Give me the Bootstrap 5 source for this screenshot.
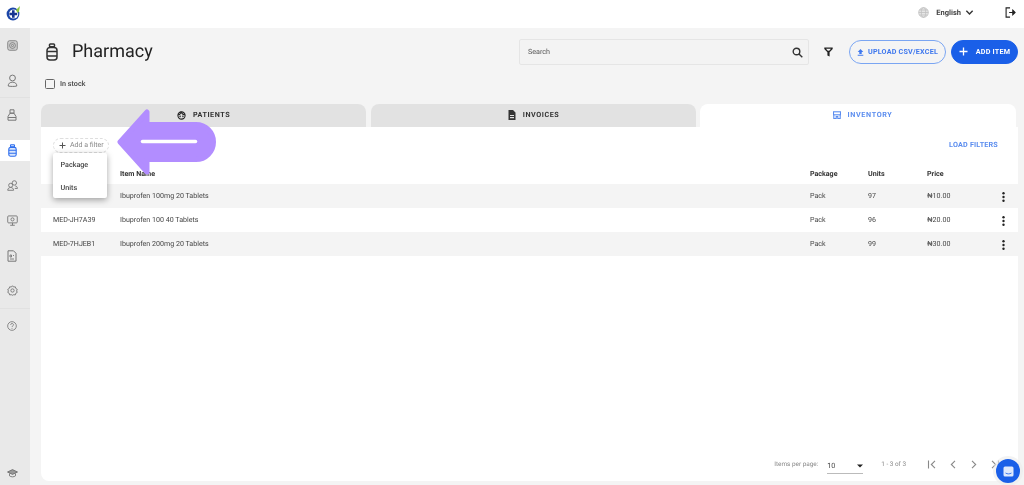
<!DOCTYPE html>
<html lang="en">
<head>
<meta charset="utf-8">
<title>Pharmacy</title>
<link href="https://cdn.jsdelivr.net/npm/bootstrap@5.3.0/dist/css/bootstrap.min.css" rel="stylesheet">
<style>
html,body{height:485px;overflow:hidden}
body{font-family:Roboto,"Liberation Sans",sans-serif;font-size:7.2px;color:#333;background:#f4f4f4;text-rendering:geometricPrecision}
svg{display:block;flex:none}
.top-strip,.shell,.callout,.chat-dot{filter:blur(.35px)}
.top-strip{height:28px;background:#fff;padding:0 8px 3px 5px}
.lang-name{font-weight:700;font-size:7.500px;color:#444;margin:0 4px 0 7px}
.logout-ico{margin-left:31px}
.shell{height:457px}
.side-rail{width:30px;flex:none;background:#e9e9e9}
.rail-cell{height:35px;flex:none;border-bottom:1px solid transparent;padding-right:6px}
.rail-cell.sep{border-bottom-color:#e1e1e1}
.rail-cell.on{background:#fff;height:21px;margin:7px 0 7.500px}
.rail-foot{margin-top:auto;height:16px;padding-right:6px}
.work-pane{padding:0 6px 4px 11px;min-width:0}
.head-row{height:47px;flex:none}
.title-ico{margin:0 13px 0 4px}
.page-title{font-size:18px;font-weight:400;color:#222;margin:0}
.search-box{width:290px;height:26px;background:#f3f3f3;border:1px solid #e5e5e5;border-radius:2px;padding:1px 5px 0 8px;margin-right:15px;color:#555;font-size:7.200px}
.filter-ico{margin-right:16px}
.pill-btn{height:24px;border-radius:12px;font-size:7.200px;font-weight:700;letter-spacing:.2px;padding:0;line-height:1}
.pill-ghost{width:97px;border:1px solid #7aa5f2;color:#3f78ee;background:transparent;margin-right:5px}
.pill-fill{width:67px;background:#1a5fe8;border:1px solid #1a5fe8;color:#fff}
.stock-row{height:18px;margin-bottom:11px;padding-left:4px;color:#444;font-weight:500;flex:none}
.tick-box{width:10px;height:10px;border:1.200px solid #666;border-radius:1.500px;margin-right:5px}
.tab-strip{gap:5px;height:23px;flex:none}
.tab-cell{width:325px;background:#e2e2e2;border-radius:8px 8px 0 0;font-weight:700;font-size:7.200px;letter-spacing:.55px;color:#333;padding-bottom:1px;gap:7px}
.tab-cell.live{width:316px;background:#fff;color:#5b8def;margin-left:-1px;padding-left:9px;letter-spacing:.65px}
.sheet{background:#fff;border-radius:0 0 8px 8px;flex:1;min-height:0;position:relative}
.filter-row{height:37px;padding:0 20px 0 12px;flex:none}
.chip-add{width:56px;height:15px;border:1px dashed #dedede;border-radius:8px;color:#888;font-size:7px;gap:4px;padding-left:5px;white-space:nowrap}
.load-link{font-weight:700;font-size:7.200px;color:#5b8def;letter-spacing:.2px;text-decoration:none}
.stock-table{width:100%;table-layout:fixed;margin:0;font-size:7.100px;color:#444;border-collapse:collapse}
.stock-table th{font-weight:700;color:#333;height:20px;padding:0 0 0 12px;vertical-align:middle;border:0}
.stock-table td{padding:1px 0 0 12px;vertical-align:middle;height:24px;border:0}
.stock-table tbody tr:nth-child(odd) td{background:#f4f4f4}
.c-code{width:67px}.c-name{width:690px}.c-pack{width:58px}.c-unit{width:59px}.c-price{width:75px}
.pager{height:33px;padding-right:18px;color:#888;font-size:6.400px;position:absolute;left:0;right:0;bottom:0;justify-content:flex-end}
.per-select{width:36px;height:15px;border-bottom:1px solid #bbb;margin:4px 18px 0 9px;color:#444;font-size:7.200px}
.range-txt{margin-right:21px}
.pager-ico{margin-right:11px}
.drop-menu{position:absolute;left:12px;top:26px;width:54px;height:45px;background:#fff;border-radius:2px;box-shadow:0 2px 6px rgba(0,0,0,.35);color:#444;font-size:7.200px;font-weight:500;padding:0 0 0 7.500px;z-index:3}
.drop-item{height:23.500px;padding-top:1px}
.callout{position:absolute;left:116px;top:108px;z-index:5}
.chat-dot{position:absolute;left:996px;top:459px;width:24px;height:24px;border-radius:50%;background:#1a5fe8;box-shadow:0 0 0 3px rgba(235,235,235,.6);z-index:6}
</style>
</head>
<body>
<header class="top-strip d-flex align-items-center">
  <svg width="16" height="16" viewBox="0 0 16 16"><circle cx="8" cy="9" r="6.400" fill="#1c46a8"/><circle cx="8.600" cy="9" r="4.600" fill="#fff"/><path d="M7 5.200h2.600v2.500h2.600v2.600H9.600v2.500H7v-2.500H4.400V7.700H7z" fill="#16358f"/><path d="M11 5 15 1 14 6.500 12.500 8z" fill="#8cc63f"/></svg>
  <div class="ms-auto d-flex align-items-center">
    <svg width="11" height="11" viewBox="0 0 12 12" fill="none" stroke="#bdbdbd" stroke-width=".8"><circle cx="6" cy="6" r="5.300" fill="#e6e6e6"/><ellipse cx="6" cy="6" rx="2.400" ry="5.300"/><path d="M.7 6h10.600M1.500 3.300h9M1.500 8.700h9"/></svg>
    <span class="lang-name">English</span>
    <svg width="9" height="9" viewBox="0 0 10 10" fill="none" stroke="#333" stroke-width="1.500"><path d="m1.500 3 3.500 3.700L8.500 3"/></svg>
    <svg class="logout-ico" width="11" height="11" viewBox="0 0 12 12" fill="none" stroke="#222" stroke-width="1.200"><path d="M5.500 1H1.200v10h4.300M4.500 6h6"/><path d="M8.500 3.500 11 6 8.500 8.500z" fill="#222"/></svg>
  </div>
</header>
<div class="shell d-flex">
  <nav class="side-rail d-flex flex-column">
    <div class="rail-cell d-flex align-items-center justify-content-center"><svg width="11" height="11" viewBox="0 0 12 12" fill="#d0d0d0" stroke="#777" stroke-width=".9"><rect x=".8" y=".8" width="10.400" height="10.400" rx="2"/><circle cx="6" cy="6" r="3.200" fill="none"/><circle cx="6" cy="6" r="1.200" fill="none"/></svg></div>
    <div class="rail-cell sep d-flex align-items-center justify-content-center"><svg width="11" height="13" viewBox="0 0 11 13" fill="none" stroke="#777" stroke-width="1"><circle cx="5.500" cy="4" r="2.900"/><path d="M1.200 12c0-2.600 1.800-3.800 4.300-3.800s4.300 1.200 4.300 3.800c-2 .6-6.600.6-8.600 0z"/></svg></div>
    <div class="rail-cell d-flex align-items-center justify-content-center"><svg width="10" height="12" viewBox="0 0 10 12" fill="none" stroke="#777" stroke-width="1"><path d="M3 .8h4v3.400H3zM1 11.200V7.500L3 4.200h4l2 3.300v3.700zM1 8.500h8"/></svg></div>
    <div class="rail-cell on d-flex align-items-center justify-content-center"><svg width="9" height="13" viewBox="0 0 9 13" fill="#dbe6fb" stroke="#2f6fee" stroke-width="1.100"><rect x="2.500" y=".8" width="4" height="2" rx=".6"/><rect x=".8" y="3.400" width="7.400" height="8.800" rx="1.800"/><path d="M.8 6.200h7.400M.8 9.300h7.400" fill="none"/></svg></div>
    <div class="rail-cell d-flex align-items-center justify-content-center"><svg width="11" height="11" viewBox="0 0 12 12" fill="none" stroke="#777" stroke-width="1"><circle cx="8" cy="3.200" r="2.400"/><circle cx="4" cy="5.800" r="2.200"/><path d="M.8 11.200c0-2 1.400-3 3.200-3s3.200 1 3.200 3zM9 6.500c1.400.2 2.400 1.100 2.400 2.700H8.500"/></svg></div>
    <div class="rail-cell d-flex align-items-center justify-content-center"><svg width="11" height="11" viewBox="0 0 12 12" fill="none" stroke="#777" stroke-width="1"><rect x=".8" y="1" width="10.400" height="7.600" rx="1"/><circle cx="6" cy="4.800" r="1.700"/><path d="M6 8.600v2.400M3.500 11.200h5"/></svg></div>
    <div class="rail-cell d-flex align-items-center justify-content-center"><svg width="10" height="12" viewBox="0 0 10 12" fill="none" stroke="#777" stroke-width="1"><path d="M1 .8h5.500L9 3.300v7.900H1z"/><path d="M3 5h1.500v2H3zM3 9h4M6 5.500h1" stroke-width=".9"/></svg></div>
    <div class="rail-cell sep d-flex align-items-center justify-content-center"><svg width="11" height="11" viewBox="0 0 12 12" fill="none" stroke="#777" stroke-width="1"><path d="M6 .8 7.200 2.200l1.900-.2.500 1.800 1.600 1L10.400 6.500l.8 1.500-1.600 1-.5 1.800-1.900-.2L6 11.200l-1.200-.6-1.900.2-.5-1.800-1.600-1 .8-1.500-.8-1.700 1.600-1 .5-1.800 1.900.2z"/><circle cx="6" cy="6" r="1.800"/></svg></div>
    <div class="rail-cell d-flex align-items-center justify-content-center"><svg width="10" height="10" viewBox="0 0 12 12" fill="none" stroke="#777" stroke-width="1"><circle cx="6" cy="6" r="5.200"/><path d="M4.300 4.600C4.400 3.500 5.200 3 6 3c1 0 1.800.7 1.800 1.600 0 1.300-1.800 1.300-1.800 2.600M6 8.300v1"/></svg></div>
    <div class="rail-foot d-flex align-items-start justify-content-center"><svg width="11" height="9" viewBox="0 0 11 9" fill="#999" stroke="#666" stroke-width=".8"><path d="M5.500.6 10.500 3 5.500 5.400.5 3z"/><path d="M2.500 4.500v2.300c1.500 1.400 4.500 1.400 6 0V4.500" fill="none"/></svg></div>
  </nav>
  <main class="work-pane flex-grow-1 d-flex flex-column">
    <div class="head-row d-flex align-items-center">
      <svg class="title-ico" width="14" height="18" viewBox="0 0 14 18" fill="none" stroke="#333" stroke-width="1.500"><rect x="4.500" y="1" width="5" height="2.800" rx=".8"/><rect x="2" y="4.500" width="10" height="12.500" rx="3"/><path d="M2 8.500h10M2 13h10"/></svg>
      <h1 class="page-title">Pharmacy</h1>
      <div class="search-box ms-auto d-flex align-items-center justify-content-between"><span>Search</span>
        <svg width="11" height="11" viewBox="0 0 11 11" fill="none" stroke="#333" stroke-width="1.400"><circle cx="4.500" cy="4.500" r="3.300"/><path d="m7 7 3.300 3.300"/></svg></div>
      <svg class="filter-ico" width="9" height="10" viewBox="0 0 9 10" fill="#222"><path d="M.3 .5h8.400v1.400L5.600 5.200V9.500L3.400 8.500V5.200L.3 1.900zM2 1.800l1.800 2h1.400l1.800-2z" fill-rule="evenodd"/></svg>
      <button type="button" class="btn pill-btn pill-ghost d-flex align-items-center justify-content-center gap-1"><svg width="7" height="8" viewBox="0 0 7 8" fill="#3f78ee"><path d="M3.500 1 6.300 4H4.700v2H2.300V4H.7zM.7 6.800h5.600v1H.7z"/></svg>UPLOAD CSV/EXCEL</button>
      <button type="button" class="btn pill-btn pill-fill d-flex align-items-center justify-content-center"><svg class="me-2" width="9" height="9" viewBox="0 0 9 9" stroke="#fff" stroke-width="1.300"><path d="M4.500.5v8M.5 4.500h8"/></svg>ADD ITEM</button>
    </div>
    <div class="stock-row d-flex align-items-center"><span class="tick-box"></span><span>In stock</span></div>
    <div class="tab-strip d-flex">
      <div class="tab-cell d-flex align-items-center justify-content-center"><svg width="9" height="9" viewBox="0 0 10 10" fill="none" stroke="#222" stroke-width="1.200"><circle cx="5" cy="5" r="4"/><path d="M1.200 4.200C3 4.200 4 3 4.500 1.500 5.500 3.300 7 4.200 8.800 4.200"/><circle cx="3.500" cy="6" r=".3"/><circle cx="6.500" cy="6" r=".3"/></svg>PATIENTS</div>
      <div class="tab-cell d-flex align-items-center justify-content-center"><svg width="8" height="10" viewBox="0 0 8 10" fill="#333"><path d="M.5 0h4.500L7.500 2.500V10h-7zM2 5v1h4V5zm0 2v1.200h4V7z" fill-rule="evenodd"/></svg>INVOICES</div>
      <div class="tab-cell live d-flex align-items-center justify-content-center"><svg width="8" height="8" viewBox="0 0 8 8" fill="none" stroke="#5b8def" stroke-width="1.100"><rect x=".5" y=".8" width="7" height="3"/><path d="M.8 3.800v3.700h2.400V5.500h1.600v2h2.400V3.800"/></svg>INVENTORY</div>
    </div>
    <section class="sheet d-flex flex-column">
      <div class="filter-row d-flex align-items-center justify-content-between">
        <div class="chip-add d-flex align-items-center"><svg width="7" height="7" viewBox="0 0 7 7" stroke="#555" stroke-width="1"><path d="M3.500.5v6M.5 3.500h6"/></svg><span>Add a filter</span></div>
        <a class="load-link" href="#">LOAD FILTERS</a>
      </div>
      <div class="drop-menu"><div class="drop-item d-flex align-items-center">Package</div><div class="drop-item d-flex align-items-center">Units</div></div>
      <table class="table stock-table">
        <colgroup><col class="c-code"><col class="c-name"><col class="c-pack"><col class="c-unit"><col class="c-price"><col></colgroup>
        <thead><tr><th></th><th>Item Name</th><th>Package</th><th>Units</th><th>Price</th><th></th></tr></thead>
        <tbody>
          <tr><td></td><td>Ibuprofen 100mg 20 Tablets</td><td>Pack</td><td>97</td><td>₦10.00</td><td><svg width="3" height="10" viewBox="0 0 3 10" fill="#222"><circle cx="1.500" cy="1.300" r="1.200"/><circle cx="1.500" cy="5" r="1.200"/><circle cx="1.500" cy="8.700" r="1.200"/></svg></td></tr>
          <tr><td>MED-JH7A39</td><td>Ibuprofen 100 40 Tablets</td><td>Pack</td><td>96</td><td>₦20.00</td><td><svg width="3" height="10" viewBox="0 0 3 10" fill="#222"><circle cx="1.500" cy="1.300" r="1.200"/><circle cx="1.500" cy="5" r="1.200"/><circle cx="1.500" cy="8.700" r="1.200"/></svg></td></tr>
          <tr><td>MED-7HJEB1</td><td>Ibuprofen 200mg 20 Tablets</td><td>Pack</td><td>99</td><td>₦30.00</td><td><svg width="3" height="10" viewBox="0 0 3 10" fill="#222"><circle cx="1.500" cy="1.300" r="1.200"/><circle cx="1.500" cy="5" r="1.200"/><circle cx="1.500" cy="8.700" r="1.200"/></svg></td></tr>
        </tbody>
      </table>
      <div class="pager d-flex align-items-center">
        <span>Items per page:</span>
        <div class="per-select d-flex align-items-center justify-content-between"><span>10</span><svg width="6" height="4" viewBox="0 0 6 4" fill="#222"><path d="M0 .5h6L3 3.500z"/></svg></div>
        <span class="range-txt">1 - 3 of 3</span>
        <svg class="pager-ico" width="10" height="9" viewBox="0 0 10 9" fill="none" stroke="#888" stroke-width="1.100"><path d="M1.500.5v8M8 .8 4.300 4.500 8 8.200"/></svg>
        <svg class="pager-ico" width="10" height="9" viewBox="0 0 10 9" fill="none" stroke="#888" stroke-width="1.100"><path d="M7 .8 3.300 4.500 7 8.200"/></svg>
        <svg class="pager-ico" width="10" height="9" viewBox="0 0 10 9" fill="none" stroke="#888" stroke-width="1.100"><path d="M3 .8 6.700 4.500 3 8.200"/></svg>
        <svg width="10" height="9" viewBox="0 0 10 9" fill="none" stroke="#888" stroke-width="1.100"><path d="M2 .8 5.700 4.500 2 8.200M8.500.5v8"/></svg>
      </div>
    </section>
  </main>
</div>
<svg class="callout" width="104" height="68" viewBox="0 0 104 68"><path d="M4 34 31 4V16.500H80a17.500 17.500 0 0 1 0 35H31V64z" fill="#b28dff" stroke="#b28dff" stroke-width="5" stroke-linejoin="round"/><path d="M26.500 33.500H79.500" stroke="#fff" stroke-width="3.500" stroke-linecap="round"/></svg>
<div class="chat-dot d-flex align-items-center justify-content-center"><svg width="11" height="11" viewBox="0 0 11 11"><path d="M2 .5h7A1.500 1.500 0 0 1 10.500 2v7A1.500 1.500 0 0 1 9 10.500H2A1.500 1.500 0 0 1 .5 9V2A1.500 1.500 0 0 1 2 .5z" fill="#dfe9fc"/><path d="M2.500 7c2 1.200 4 1.200 6 0" stroke="#1a5fe8" fill="none" stroke-width=".8"/></svg></div>
<script src="https://cdn.jsdelivr.net/npm/bootstrap@5.3.0/dist/js/bootstrap.bundle.min.js"></script>
</body>
</html>
